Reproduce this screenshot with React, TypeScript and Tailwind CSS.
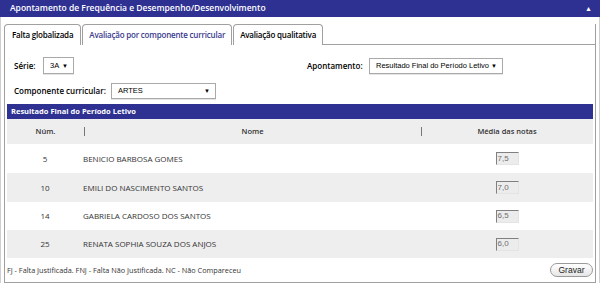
import React from "react";

const rows = [
  { n: "5", nome: "BENICIO BARBOSA GOMES", nota: "7,5" },
  { n: "10", nome: "EMILI DO NASCIMENTO SANTOS", nota: "7,0" },
  { n: "14", nome: "GABRIELA CARDOSO DOS SANTOS", nota: "6,5" },
  { n: "25", nome: "RENATA SOPHIA SOUZA DOS ANJOS", nota: "6,0" },
];

const arial = { fontFamily: '"Liberation Sans", Arial, sans-serif' };

function Select({ value, className }: { value: string; className: string }) {
  return (
    <div
      className={`flex items-center justify-between whitespace-nowrap border border-[#a9a9a9] bg-white pl-[6px] pr-[5px] text-[7.5px] text-black shadow-[0_1px_0_#e5e5e5] ${className}`}
      style={arial}
    >
      <span>{value}</span>
      <span className="text-[6px] leading-none">▼</span>
    </div>
  );
}

export default function App() {
  return (
    <div
      className="h-[286px] w-[600px] bg-white"
      style={{ fontFamily: '"Open Sans", sans-serif' }}
    >
      <div className="flex h-[17px] items-center justify-between bg-[#2e3192] pl-[10px] pr-[8px]">
        <span className="whitespace-nowrap text-[8.5px] font-semibold text-white">
          Apontamento de Frequência e Desempenho/Desenvolvimento
        </span>
        <span className="text-[7px] leading-none text-white">▲</span>
      </div>
      <div className="border-x border-[#cfcfcf] px-[3px] pt-[7px]">
        <div className="flex h-[21px] items-end">
          <div className="flex h-[21px] items-center whitespace-nowrap rounded-t-[4px] border border-b-0 border-[#a0a0a0] bg-white px-[7px] text-[8px] font-semibold tracking-[-0.2px] text-black">
            Falta globalizada
          </div>
          <div className="ml-[1px] flex h-[21px] items-center whitespace-nowrap rounded-t-[4px] border border-b-0 border-[#a0a0a0] bg-white px-[6px] text-[8px] font-semibold tracking-[-0.2px] text-[#3a3a8e]">
            Avaliação por componente curricular
          </div>
          <div className="ml-[1px] flex h-[21px] items-center whitespace-nowrap rounded-t-[4px] border border-b-0 border-[#a0a0a0] bg-white px-[6px] text-[8px] font-semibold tracking-[-0.2px] text-black">
            Avaliação qualitativa
          </div>
          <div className="h-[21px] flex-1 border-b border-r border-[#a0a0a0]" />
        </div>
        <div className="h-[238px] border border-t-0 border-[#a0a0a0] px-[2px] pt-[12px]">
          <div className="flex h-[17px] items-center pl-[7px]">
            <div className="flex w-[293px] items-center">
              <span className="w-[29px] whitespace-nowrap text-[8px] font-semibold text-black">Série:</span>
              <Select value="3A" className="h-[17px] w-[31px]" />
            </div>
            <div className="flex items-center">
              <span className="w-[62px] whitespace-nowrap text-[8px] font-semibold text-black">Apontamento:</span>
              <Select value="Resultado Final do Período Letivo" className="h-[16px] w-[134px]" />
            </div>
          </div>
          <div className="mt-[9px] flex h-[16px] items-center pl-[7px]">
            <span className="w-[97px] whitespace-nowrap text-[8px] font-semibold text-black">Componente curricular:</span>
            <Select value="ARTES" className="h-[16px] w-[105px]" />
          </div>
          <div className="mt-[5px] flex h-[15px] items-center whitespace-nowrap bg-[#2e3192] pl-[4px] text-[7.5px] font-bold text-white">
            Resultado Final do Período Letivo
          </div>
          <div className="flex h-[25px] items-center bg-[#eeeeee] text-[7.5px] font-semibold text-[#333]">
            <div className="w-[77px] text-center">Núm.</div>
            <div className="relative flex w-[337px] justify-center">
              <span className="absolute left-0 top-[1px] h-[9px] w-px bg-[#777]" />
              Nome
            </div>
            <div className="relative flex flex-1 justify-center">
              <span className="absolute left-0 top-[1px] h-[9px] w-px bg-[#777]" />
              Média das notas
            </div>
          </div>
          {rows.map((r, i) => (
            <div
              key={r.n}
              className={`flex items-center text-[8px] text-[#333] ${i % 2 === 1 ? "bg-[#eeeeee]" : "bg-white"} ${i < 2 ? "h-[29px]" : "h-[28px]"}`}
            >
              <div className="w-[76px] text-center">{r.n}</div>
              <div className="w-[338px] whitespace-nowrap">{r.nome}</div>
              <div className="flex flex-1 justify-center">
                <div
                  className="flex h-[13px] w-[23px] items-center border border-b-[#e4e4e4] border-l-[#808080] border-r-[#e4e4e4] border-t-[#808080] bg-[#ececec] pl-[1px] text-[8px] leading-none text-[#6d6d6d]"
                  style={arial}
                >
                  {r.nota}
                </div>
              </div>
            </div>
          ))}
          <div className="flex h-[24px] items-center justify-between">
            <span className="whitespace-nowrap text-[7.3px] text-[#333]">
              FJ - Falta Justificada. FNJ - Falta Não Justificada. NC - Não Compareceu
            </span>
            <button
              className="flex h-[14px] w-[43px] items-center justify-center rounded-full border border-[#9a9a9a] bg-gradient-to-b from-white to-[#e6e6e6] text-[8.5px] text-[#222]"
              style={arial}
            >
              Gravar
            </button>
          </div>
        </div>
      </div>
    </div>
  );
}
